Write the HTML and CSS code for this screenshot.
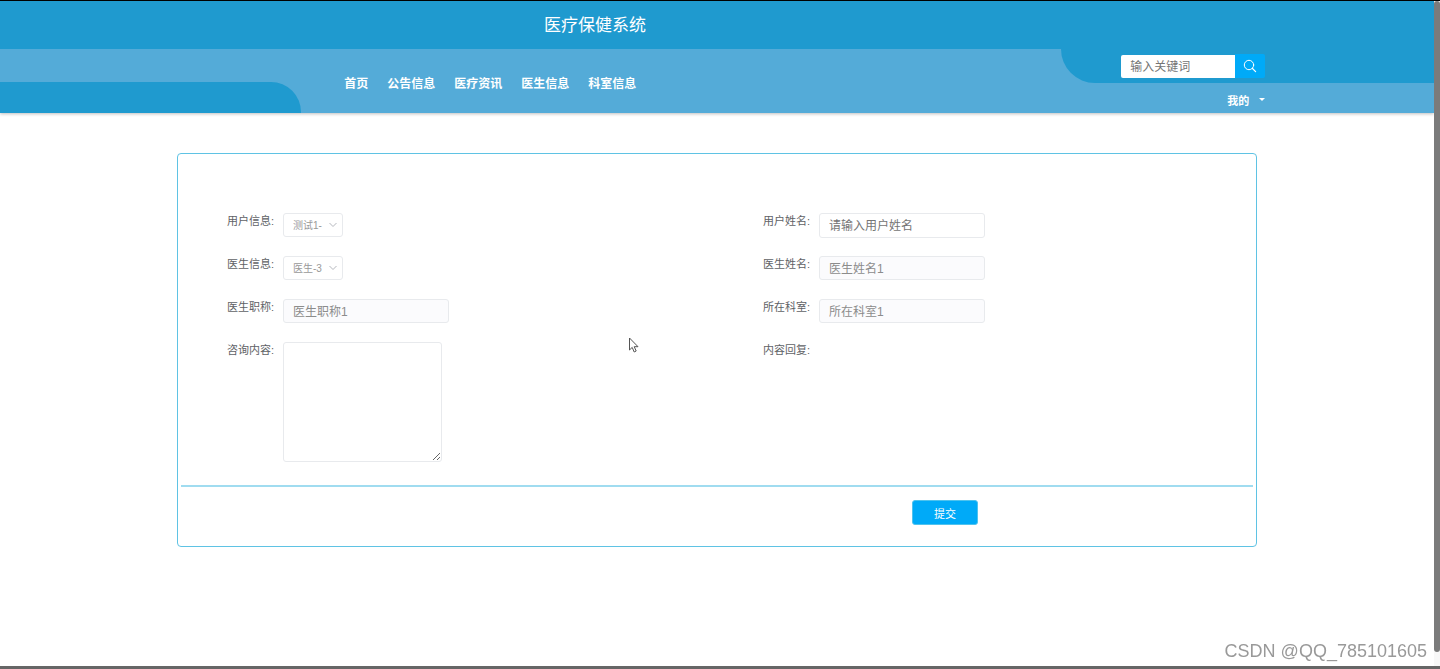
FILE: index.html
```html
<!DOCTYPE html>
<html lang="zh-CN">
<head>
<meta charset="utf-8">
<meta name="viewport" content="width=device-width, initial-scale=1">
<title>医疗保健系统</title>
<link rel="stylesheet" href="styles.css">
</head>
<body>
<div class="page">
  <header class="header">
    <h1 class="title">医疗保健系统</h1>
    <div class="navbar">
      <div class="tab-shape"></div>
      <nav class="nav">
        <a href="#">首页</a>
        <a href="#">公告信息</a>
        <a href="#">医疗资讯</a>
        <a href="#">医生信息</a>
        <a href="#">科室信息</a>
      </nav>
      <div class="tools">
        <form class="search">
          <input class="search-input" type="text" placeholder="输入关键词" aria-label="输入关键词">
          <button class="search-button" type="button" aria-label="搜索">
            <svg width="14" height="14" viewBox="0 0 14 14" fill="none" stroke="currentColor" stroke-width="1" stroke-linecap="round"><circle cx="6" cy="6" r="4.7"/><path d="M9.5 9.5 12.6 12.6" stroke-width="1.2"/></svg>
          </button>
        </form>
        <button class="account" type="button">我的
          <svg width="6" height="3" viewBox="0 0 6 3" fill="currentColor"><path d="M0 0h6L3 3z"/></svg>
        </button>
      </div>
    </div>
  </header>

  <main class="main">
    <form class="card">
      <div class="fields">
        <div class="field">
          <label for="user">用户信息:</label>
          <div class="select">
            <select id="user" disabled><option>测试1-</option></select>
            <svg class="chevron" width="8" height="6" viewBox="0 0 8 6" fill="none" stroke="currentColor"><path d="M.5 1 4 4.5 7.5 1"/></svg>
          </div>
        </div>
        <div class="field">
          <label for="username">用户姓名:</label>
          <input class="text" id="username" type="text" placeholder="请输入用户姓名">
        </div>
        <div class="field">
          <label for="doctor">医生信息:</label>
          <div class="select">
            <select id="doctor" disabled><option>医生-3</option></select>
            <svg class="chevron" width="8" height="6" viewBox="0 0 8 6" fill="none" stroke="currentColor"><path d="M.5 1 4 4.5 7.5 1"/></svg>
          </div>
        </div>
        <div class="field">
          <label for="doctor-name">医生姓名:</label>
          <input class="text" id="doctor-name" type="text" value="医生姓名1" disabled>
        </div>
        <div class="field">
          <label for="job">医生职称:</label>
          <input class="text" id="job" type="text" value="医生职称1" disabled>
        </div>
        <div class="field">
          <label for="dept">所在科室:</label>
          <input class="text" id="dept" type="text" value="所在科室1" disabled>
        </div>
        <div class="field">
          <label for="content">咨询内容:</label>
          <textarea class="area" id="content"></textarea>
        </div>
        <div class="field">
          <span class="label">内容回复:</span>
        </div>
      </div>
      <div class="actions">
        <button class="submit" type="button">提交</button>
      </div>
    </form>
  </main>
</div>
<div class="scroll-track"><div class="scroll-thumb"></div></div>
<div class="bottom-edge"></div>
<div class="watermark">CSDN @QQ_785101605</div>
<svg class="cursor" width="10" height="16" viewBox="0 0 10 16" fill="#fff" stroke="#555"><path d="M.5 1v12l2.7-2.6 2 4.6 2-1-2-4.3H9z"/></svg>
</body>
</html>
```
FILE: styles.css
```css
* {
  box-sizing: border-box;
}

body {
  margin: 0;
  min-height: 100vh;
  display: flex;
  border-top: 1px solid #000;
  background: #fff;
  color: #606266;
  font-family: "Liberation Sans", "Noto Sans CJK SC", sans-serif;
  font-size: 12px;
}

input,
select,
textarea,
button {
  margin: 0;
  font-family: inherit;
}

.page {
  flex: 1;
  min-width: 0;
}

.header {
  background: #1f9acf;
  color: #fff;
  box-shadow: 0 1px 3px rgba(0, 0, 0, 0.25);
}

.title {
  width: 83%;
  margin: 0;
  padding-top: 2px;
  font-size: 17px;
  font-weight: 400;
  line-height: 46px;
  text-align: center;
}

.navbar {
  display: grid;
  grid-template-columns: 21% 1fr 26%;
  min-height: 64px;
  background: #54abd8;
}

.tab-shape {
  height: 31px;
  align-self: end;
  background: #1f9acf;
  border-top-right-radius: 30px;
}

.nav {
  display: flex;
  align-items: center;
  gap: 19px;
  padding: 2px 0 0 43px;
}

.nav a {
  color: #fff;
  font-weight: 700;
  text-decoration: none;
  white-space: nowrap;
}

.tools {
  display: flex;
  flex-direction: column;
}

.search {
  display: flex;
  align-items: center;
  height: 34px;
  padding-left: 60px;
  background: #1f9acf;
  border-bottom-left-radius: 34px;
}

.search-input {
  width: 114px;
  height: 23px;
  padding: 1px 9px 0;
  border: 0;
  border-radius: 2px 0 0 2px;
  background: #fff;
  font-size: 12px;
  outline: 0;
}

.search-input::placeholder,
.text::placeholder {
  color: #757575;
}

.search-button {
  display: flex;
  align-items: center;
  justify-content: center;
  width: 30px;
  height: 24px;
  padding: 0;
  border: 0;
  border-radius: 0 2px 2px 0;
  background: #00aaf8;
  color: #fff;
}

.account {
  display: flex;
  align-items: center;
  gap: 10px;
  width: 204px;
  height: 30px;
  justify-content: flex-end;
  padding: 3px 0 0;
  border: 0;
  background: none;
  color: #fff;
  font-size: 11px;
  font-weight: 700;
}

.main {
  padding: 40px 24px;
}

.card {
  max-width: 1080px;
  margin: 0 auto;
  padding: 59px 3px 21px;
  border: 1px solid #5fc3e4;
  border-radius: 4px;
}

.fields {
  display: grid;
  grid-template-columns: 1fr 1fr;
  row-gap: 18px;
  padding-bottom: 23px;
  border-bottom: 2px solid #a0dcf0;
}

.field {
  display: flex;
  align-items: flex-start;
  min-height: 25px;
  padding-left: 46px;
}

.field label,
.label {
  width: 56px;
  font-size: 11px;
  line-height: 17px;
  white-space: nowrap;
}

.text,
.area,
.select select {
  border: 1px solid #e8eaed;
  border-radius: 3px;
  background: #fff;
  outline: 0;
}

.text {
  width: 166px;
  height: 25px;
  padding: 0 9px;
  font-size: 12px;
}

.text:disabled {
  height: 24px;
  padding-bottom: 1px;
  background: #fbfbfd;
  color: #8c8c8c;
}

.select {
  position: relative;
}

.select select {
  display: block;
  width: 60px;
  height: 24px;
  padding: 1px 18px 0 9px;
  appearance: none;
  color: #999;
  font-size: 10px;
  opacity: 1;
}

.chevron {
  position: absolute;
  right: 6px;
  top: 9px;
  color: #b4b7bd;
}

.area {
  width: 159px;
  height: 120px;
}

.actions {
  padding: 13px 0 0 calc(50% + 195px);
}

.submit {
  display: block;
  width: 66px;
  height: 25px;
  padding: 0;
  border: 1px solid #4fc3ee;
  border-radius: 3px;
  background: #00aaf8;
  color: #fff;
  font-size: 11px;
}

.scroll-track {
  width: 6px;
  padding-bottom: 17px;
  display: flex;
  background: #f8f8f8;
}

.scroll-thumb {
  flex: 1;
  border-radius: 3px;
  background: #7b7b7b;
}

.bottom-edge {
  position: fixed;
  left: 0;
  right: 0;
  bottom: 0;
  height: 3px;
  background: #666;
}

.watermark {
  position: fixed;
  right: 13px;
  bottom: 5px;
  color: #999;
  font-size: 18px;
  line-height: 26px;
}

.cursor {
  position: absolute;
  left: 629px;
  top: 337px;
}
```
